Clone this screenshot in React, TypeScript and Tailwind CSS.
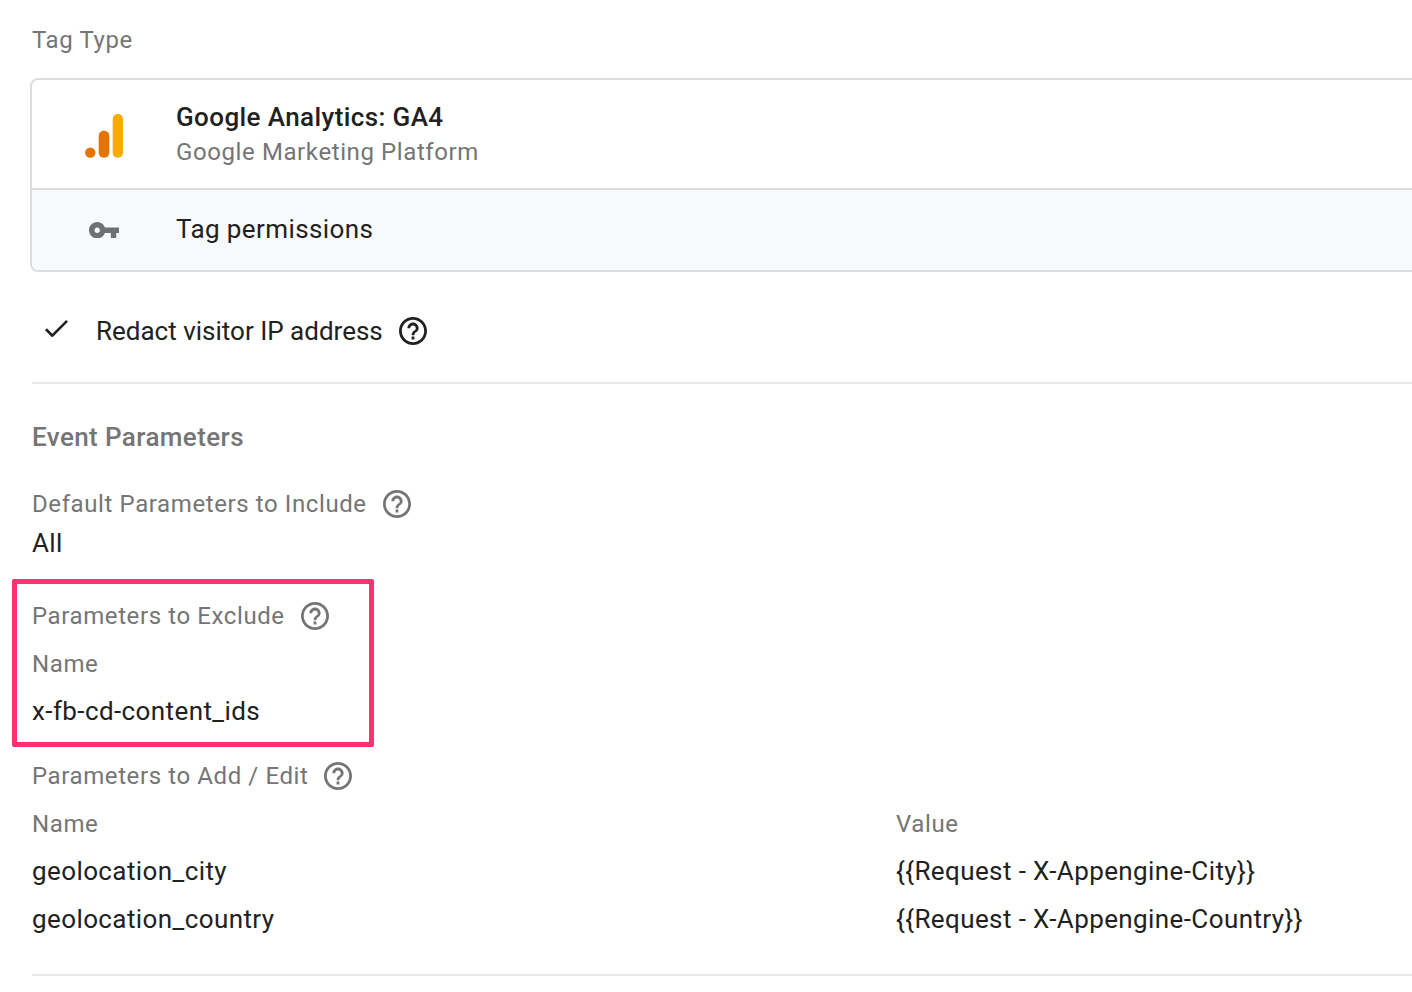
import React from "react";

function Help({ dark = false }: { dark?: boolean }) {
  const c = dark ? "#212121" : "#757575";
  return (
    <svg width="28" height="28" viewBox="2 2 20 20" className="block shrink-0">
      <path fill={c} d="M11 18h2v-2h-2v2zm1-16C6.48 2 2 6.48 2 12s4.48 10 10 10 10-4.48 10-10S17.52 2 12 2zm0 18c-4.41 0-8-3.59-8-8s3.59-8 8-8 8 3.59 8 8-3.59 8-8 8zm0-14c-2.21 0-4 1.79-4 4h2c0-1.1.9-2 2-2s2 .9 2 2c0 2-3 1.75-3 5h2c0-2.25 3-2.5 3-5 0-2.21-1.79-4-4-4z" />
    </svg>
  );
}

function Analytics() {
  return (
    <svg width="38" height="44" viewBox="0 0 38 44" className="block">
      <rect x="27.7" y="0" width="10.3" height="43.8" rx="5" fill="#f9ab00" />
      <rect x="13.7" y="16.7" width="10.6" height="27.1" rx="5" fill="#e37400" />
      <circle cx="5.3" cy="38.6" r="5.2" fill="#e37400" />
    </svg>
  );
}

function Key() {
  return (
    <svg width="30" height="16.4" viewBox="1 6 22 12" className="block">
      <path fill="#6f7073" d="M12.65 10C11.83 7.67 9.61 6 7 6c-3.31 0-6 2.69-6 6s2.69 6 6 6c2.61 0 4.83-1.67 5.65-4H17v4h4v-4h2v-4H12.65zM7 14c-1.1 0-2-.9-2-2s.9-2 2-2 2 .9 2 2-.9 2-2 2z" />
    </svg>
  );
}

const label = "text-[24px] leading-[32px] tracking-[0.6px] text-[#757575]";
const value = "text-[26px] leading-[32px] tracking-[0.4px] text-[#212121]";

export default function App() {
  return (
    <div className="w-[1412px] h-[992px] overflow-hidden bg-white pl-8 pt-6 font-['Roboto',sans-serif]">
      <div className={label}>Tag Type</div>

      <div className="mt-[22px] -ml-0.5 w-[1420px] h-[194px] rounded-[8px] border-2 border-[#dadce0] overflow-hidden flex flex-col">
        <div className="h-[108px] flex items-center">
          <div className="w-[144px] pl-[53px] pt-1 shrink-0"><Analytics /></div>
          <div>
            <div className="text-[26px] leading-[36px] font-medium tracking-[0.4px] text-[#212121]">Google Analytics: GA4</div>
            <div className={label + " leading-[34px]"}>Google Marketing Platform</div>
          </div>
        </div>
        <div className="flex-1 border-t-2 border-[#dadce0] bg-[#f8f9fa] flex items-center">
          <div className="w-[144px] pl-[57px] shrink-0"><Key /></div>
          <div className={value + " pb-0.5"}>Tag permissions</div>
        </div>
      </div>

      <div className="mt-[43px] h-8 flex items-center">
        <svg width="23" height="17.5" viewBox="3.41 5.59 17.59 13.41" className="ml-[13px] mb-[5px] block shrink-0">
          <path fill="#212121" d="M9 16.17L4.83 12l-1.42 1.41L9 19 21 7l-1.41-1.41z" />
        </svg>
        <span className="ml-[28px] mr-[16px] text-[26px] leading-[32px] text-[#212121]">Redact visitor IP address</span>
        <Help dark />
      </div>

      <div className="mt-[35px] h-0.5 bg-[#e8e8e8]" />

      <div className="mt-[37px] text-[26px] leading-[32px] font-medium tracking-[0.4px] text-[#757575]">Event Parameters</div>

      <div className={"mt-[35px] flex items-center gap-4 " + label}>
        <span>Default Parameters to Include</span><Help />
      </div>
      <div className={value + " mt-[7px]"}>All</div>

      <div className="mt-5 -ml-5 w-[362px] h-[168px] rounded-[2px] border-[5px] border-[#ff3170] pl-[15px] pt-4">
        <div className={"flex items-center gap-4 " + label}>
          <span>Parameters to Exclude</span><Help />
        </div>
        <div className={label + " mt-4"}>Name</div>
        <div className={value + " mt-[15px]"}>x-fb-cd-content_ids</div>
      </div>

      <div className={"mt-[13px] flex items-center gap-4 " + label}>
        <span>Parameters to Add / Edit</span><Help />
      </div>

      <div className="mt-4 grid grid-cols-[864px_1fr] grid-rows-[31px_32px_32px] gap-y-4">
        <div className={label}>Name</div>
        <div className={label}>Value</div>
        <div className={value}>geolocation_city</div>
        <div className={value}>{"{{Request - X-Appengine-City}}"}</div>
        <div className={value}>geolocation_country</div>
        <div className={value}>{"{{Request - X-Appengine-Country}}"}</div>
      </div>

      <div className="mt-[39px] h-0.5 bg-[#e8e8e8]" />
    </div>
  );
}
